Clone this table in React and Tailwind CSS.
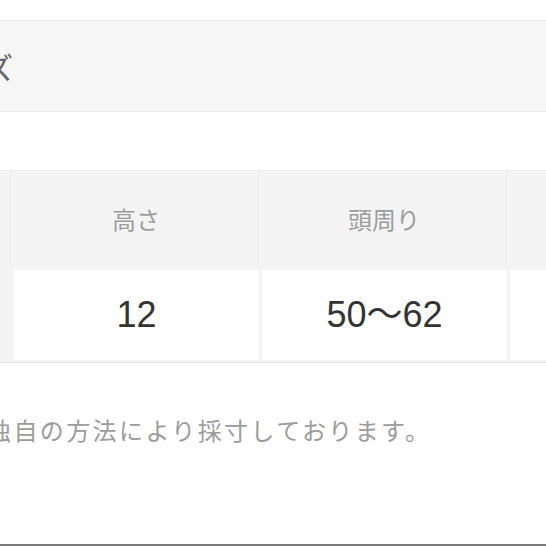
import React from "react";

const font = { fontFamily: '"Noto Sans CJK JP", "Liberation Sans", sans-serif' };

const heads = ["", "高さ", "頭周り", ""];
const values = ["", "12", "50〜62", ""];

const App = () => {
  return (
    <div className="w-[546px] h-[546px] bg-white overflow-hidden flex flex-col" style={font}>
      <div className="mt-[20px] h-[92px] bg-[#f6f6f6] border-y border-[#e9e9e9] flex items-center">
        <span className="ml-[-76px] text-[30px] text-[#666] whitespace-nowrap leading-none">サイズ</span>
      </div>

      <div className="mt-[58px] bg-[#f4f4f4] border-t border-[#ededed] border-b border-b-[#e6e6e6]">
        <div className="flex gap-[3px] ml-[-234px] h-[97px]">
          {heads.map((h, i) => (
            <div
              key={i}
              className="w-[245px] shrink-0 flex items-center justify-center border-r border-[#ececec] text-[24px] text-[#9c9c9c] pb-[2px]"
            >
              {h}
            </div>
          ))}
        </div>
        <div className="flex gap-[3px] ml-[-234px] py-[2px]">
          {values.map((v, i) => (
            <div
              key={i}
              className={
                i === 0
                  ? "w-[245px] shrink-0 h-[90px]"
                  : "w-[245px] shrink-0 h-[90px] bg-white flex items-center justify-center text-[36px] text-[#333]"
              }
              style={{ fontFamily: '"Liberation Sans", "Noto Sans CJK JP", sans-serif' }}
            >
              {v}
            </div>
          ))}
        </div>
      </div>

      <p className="mt-[49px] ml-[-13px] whitespace-nowrap text-[24px] tracking-[2.4px] text-[#9c9c9c] leading-[36px]">
        独自の方法により採寸しております。
      </p>

      <div className="mt-auto h-[2px] bg-[#7a7a7a]" />
    </div>
  );
};

export default App;
